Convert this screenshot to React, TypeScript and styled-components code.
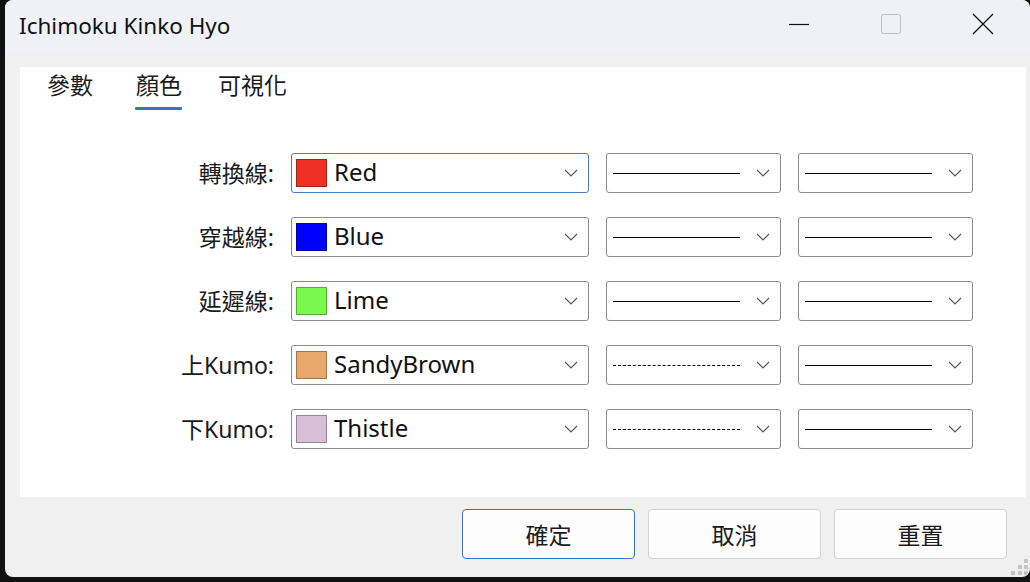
import React from 'react'
import styled, { createGlobalStyle } from 'styled-components'

const GlobalStyle = createGlobalStyle`
  html, body {
    margin: 0;
    padding: 0;
    background: #111;
    overflow: hidden;
  }
  body {
    font-family: "Segoe UI", "Noto Sans", "Noto Sans CJK TC", sans-serif;
    color: #1a1a1a;
  }
`

const Window = styled.div`
  position: relative;
  margin-left: 5px;
  width: 1025px;
  height: 577px;
  border-radius: 8px;
  background: #f0f0f0;
  overflow: hidden;
  display: flex;
  flex-direction: column;
`

const TitleBar = styled.div`
  height: 52px;
  background: #eff1f6;
  display: flex;
  align-items: center;
  padding-left: 14px;
  padding-right: 1px;
`

const Title = styled.div`
  flex: 1;
  font-size: 22.5px;
  color: #111;
  padding-bottom: 2px;
`

const CaptionButton = styled.div`
  width: 92px;
  height: 46px;
  display: flex;
  align-items: center;
  justify-content: center;
  margin-top: -4px;
`

const Body = styled.div`
  flex: 1;
  display: flex;
  flex-direction: column;
  padding: 15px 4px 0 15px;
`

const Panel = styled.div`
  background: #fff;
  height: 430px;
  display: flex;
  flex-direction: column;
`

const TabBar = styled.div`
  display: flex;
  padding-left: 27px;
  height: 44px;
  align-items: flex-end;
`

const Tab = styled.div<{ $active?: boolean }>`
  font-family: "Noto Sans CJK TC", sans-serif;
  font-size: 23px;
  line-height: 30px;
  margin-right: ${p => (p.$active ? '36px' : '43px')};
  padding-bottom: 12px;
  position: relative;
  color: #1a1a1a;
  &::after {
    content: '';
    display: ${p => (p.$active ? 'block' : 'none')};
    position: absolute;
    left: -1px;
    right: 0;
    bottom: 1px;
    height: 3px;
    background: #3a72c0;
    border-radius: 1px;
  }
`

const Grid = styled.div`
  display: grid;
  grid-template-columns: 254px 298px 175px 175px;
  column-gap: 17px;
  row-gap: 24px;
  margin-top: 42px;
  align-items: center;
`

const Label = styled.div`
  text-align: right;
  font-family: "Segoe UI", "Noto Sans", "Noto Sans CJK TC", sans-serif;
  font-size: 23px;
  color: #1a1a1a;
  padding-bottom: 2px;
`

const Combo = styled.div<{ $focused?: boolean }>`
  height: 40px;
  box-sizing: border-box;
  border: 1px solid ${p => (p.$focused ? '#4a7cc0' : '#8c8c8c')};
  border-radius: 3px;
  background: #fff;
  display: flex;
  align-items: center;
  padding: 0 10px 0 4px;
`

const Swatch = styled.div<{ $color: string }>`
  width: 31px;
  height: 28px;
  box-sizing: border-box;
  background: ${p => p.$color};
  border: 1px solid rgba(0, 0, 0, 0.3);
  margin-right: 7px;
`

const ColorName = styled.div`
  flex: 1;
  font-size: 24px;
  color: #111;
  padding-bottom: 3px;
`

const LineSample = styled.div<{ $dashed?: boolean }>`
  width: 127px;
  margin-left: 2px;
  border-top: 1px ${p => (p.$dashed ? 'dashed' : 'solid')} #000;
  margin-right: auto;
`

const Footer = styled.div`
  display: flex;
  justify-content: flex-end;
  gap: 13px;
  padding: 12px 19px 0 0;
`

const Button = styled.div<{ $primary?: boolean }>`
  width: 173px;
  height: 50px;
  box-sizing: border-box;
  border: 1px solid ${p => (p.$primary ? '#3f73b8' : '#d2d2d2')};
  border-radius: 4px;
  background: #fdfdfd;
  display: flex;
  align-items: center;
  justify-content: center;
  font-family: "Noto Sans CJK TC", sans-serif;
  font-size: 23px;
  color: #1a1a1a;
`

const Grip = styled.svg`
  position: absolute;
  right: 2px;
  bottom: 1px;
`

const Chevron = () => (
  <svg width="14" height="8" viewBox="0 0 14 8">
    <path d="M1 1 L7 7 L13 1" fill="none" stroke="#555" strokeWidth="1.1" />
  </svg>
)

type Row = { label: string; name: string; color: string; dashed?: boolean }

const rows: Row[] = [
  { label: '轉換線:', name: 'Red', color: '#ee3124' },
  { label: '穿越線:', name: 'Blue', color: '#0000ff' },
  { label: '延遲線:', name: 'Lime', color: '#79f84d' },
  { label: '上Kumo:', name: 'SandyBrown', color: '#e9a86b', dashed: true },
  { label: '下Kumo:', name: 'Thistle', color: '#d7bfd8', dashed: true },
]

const gripDots = [
  [13, 0],
  [7, 6],
  [13, 6],
  [0, 12],
  [7, 12],
  [13, 12],
]

export default function App() {
  return (
    <>
      <GlobalStyle />
      <Window>
        <TitleBar>
          <Title>Ichimoku Kinko Hyo</Title>
          <CaptionButton>
            <svg width="20" height="20" viewBox="0 0 20 20">
              <line x1="0" y1="10.5" x2="20" y2="10.5" stroke="#111" strokeWidth="1.2" />
            </svg>
          </CaptionButton>
          <CaptionButton>
            <svg width="20" height="20" viewBox="0 0 20 20">
              <rect x="0.5" y="0.5" width="19" height="19" rx="2" fill="none" stroke="#bdbdbd" strokeWidth="1" />
            </svg>
          </CaptionButton>
          <CaptionButton>
            <svg width="22" height="22" viewBox="0 0 22 22">
              <path d="M1 1 L21 21 M21 1 L1 21" stroke="#111" strokeWidth="1.3" />
            </svg>
          </CaptionButton>
        </TitleBar>
        <Body>
          <Panel>
            <TabBar>
              <Tab>參數</Tab>
              <Tab $active>顏色</Tab>
              <Tab>可視化</Tab>
            </TabBar>
            <Grid>
              {rows.map((r, i) => (
                <React.Fragment key={r.name}>
                  <Label>{r.label}</Label>
                  <Combo $focused={i === 0}>
                    <Swatch $color={r.color} />
                    <ColorName>{r.name}</ColorName>
                    <Chevron />
                  </Combo>
                  <Combo>
                    <LineSample $dashed={r.dashed} />
                    <Chevron />
                  </Combo>
                  <Combo>
                    <LineSample />
                    <Chevron />
                  </Combo>
                </React.Fragment>
              ))}
            </Grid>
          </Panel>
          <Footer>
            <Button $primary>確定</Button>
            <Button>取消</Button>
            <Button>重置</Button>
          </Footer>
        </Body>
        <Grip width="17" height="17" viewBox="0 0 17 17">
          {gripDots.map(([x, y]) => (
            <rect key={`${x}-${y}`} x={x} y={y} width="4" height="4" fill="#c4c4c4" />
          ))}
        </Grip>
      </Window>
    </>
  )
}
